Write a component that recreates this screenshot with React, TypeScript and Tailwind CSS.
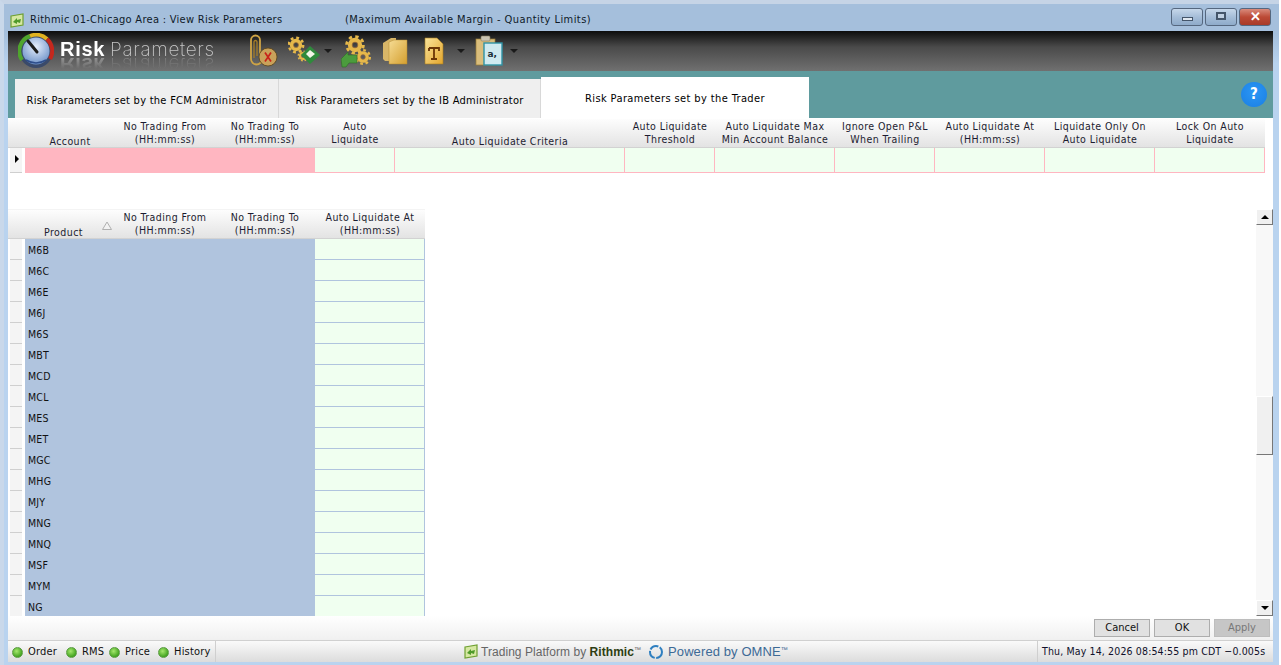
const font = "[font-family:'DejaVu_Sans_Condensed','DejaVu_Sans',sans-serif]";

const products = ["M6B","M6C","M6E","M6J","M6S","MBT","MCD","MCL","MES","MET","MGC","MHG","MJY","MNG","MNQ","MSF","MYM","NG"];

function Gauge() {
  return (
    <svg width="36" height="36" viewBox="0 0 36 36">
      <defs>
        <radialGradient id="gf" cx="50%" cy="35%" r="65%">
          <stop offset="0" stopColor="#e6eefb" />
          <stop offset="1" stopColor="#6f93c9" />
        </radialGradient>
      </defs>
      <circle cx="18" cy="18" r="17" fill="#3a4a6a" />
      <path d="M4 27 A16 16 0 0 1 12 3" fill="none" stroke="#4fa52d" strokeWidth="4" />
      <path d="M12 3 A16 16 0 0 1 29 6" fill="none" stroke="#e2b21f" strokeWidth="4" />
      <path d="M29 6 A16 16 0 0 1 32 26" fill="none" stroke="#c5281d" strokeWidth="4" />
      <circle cx="18" cy="18" r="13.5" fill="url(#gf)" />
      <path d="M10 8 L19 19" stroke="#1c1c1c" strokeWidth="3" strokeLinecap="round" />
      <path d="M8 27 Q18 33 28 27" stroke="#2d4d8a" strokeWidth="1.5" fill="none" />
    </svg>
  );
}

function Gear({ x, y, s = 1, c = "#e6b84a" }: { x: number; y: number; s?: number; c?: string }) {
  return (
    <g transform={`translate(${x} ${y}) scale(${s})`}>
      <circle r="7.6" fill="none" stroke={c} strokeWidth="2.6" strokeDasharray="3 2.97" />
      <circle r="4.6" fill="none" stroke={c} strokeWidth="3.8" />
      <circle r="2.6" fill="none" stroke="#a8753a" strokeWidth="0.7" />
    </g>
  );
}

function Clip() {
  return (
    <svg width="32" height="34" viewBox="0 0 32 34">
      <path d="M12 24 V6 a4.5 4.5 0 0 0 -9 0 V25 a5.5 5.5 0 0 0 11 0" fill="none" stroke="#cfa445" strokeWidth="1.8" />
      <path d="M9 22 V8 a1.5 1.5 0 0 0 -3 0 V24" fill="none" stroke="#a77d27" strokeWidth="1.3" />
      <circle cx="20" cy="23" r="9" fill="#c9a15a" stroke="#5a4418" strokeWidth="0.8" />
      <path d="M17 18.5 L23 27.5 M23 18.5 L17 27.5" stroke="#c8231a" strokeWidth="1.7" />
    </svg>
  );
}

function GearsSave() {
  return (
    <svg width="34" height="30" viewBox="0 0 34 30">
      <Gear x={8} y={9} s={0.95} />
      <Gear x={15} y={20} s={0.62} />
      <path d="M13 19 L22 10 L32 19 L22 28 Z" fill="#2f8a3c" />
      <path d="M18 18 L22 14 L27 18 L22 22 Z" fill="#f2f6e8" />
    </svg>
  );
}

function GearsArrow() {
  return (
    <svg width="30" height="34" viewBox="0 0 30 34">
      <Gear x={14} y={11} s={1.1} />
      <Gear x={22} y={23} s={0.9} />
      <path d="M0 25 L7 18 V21 H16 V29 H8 L5 33 H1 Z" fill="#4b9c3d" stroke="#2f6d28" strokeWidth="0.6" />
    </svg>
  );
}

function Files() {
  return (
    <svg width="26" height="28" viewBox="0 0 26 28">
      <defs>
        <linearGradient id="fg" x1="0" y1="0" x2="1" y2="1">
          <stop offset="0" stopColor="#f6dc94" />
          <stop offset="1" stopColor="#d49f2f" />
        </linearGradient>
      </defs>
      <path d="M1 6 L9 1 H14 V24 H3 L1 22 Z" fill="#d8b668" />
      <path d="M7 5 L12 3 H25 V27 H7 Z" fill="url(#fg)" stroke="#b78a2c" strokeWidth="0.5" />
    </svg>
  );
}

function FileT() {
  return (
    <svg width="20" height="28" viewBox="0 0 20 28">
      <defs>
        <linearGradient id="tg" x1="0" y1="0" x2="1" y2="1">
          <stop offset="0" stopColor="#fbe49a" />
          <stop offset="1" stopColor="#e2a52c" />
        </linearGradient>
      </defs>
      <path d="M1 1 H13 L19 7 V27 H1 Z" fill="url(#tg)" stroke="#a97d1e" strokeWidth="0.6" />
      <path d="M5 11 H15 V14 M10 11 V22 M7 22 H13 M5 11 V14" fill="none" stroke="#6b3606" strokeWidth="1.8" />
    </svg>
  );
}

function Clipboard() {
  return (
    <svg width="28" height="32" viewBox="0 0 28 32">
      <rect x="1" y="4" width="19" height="26" fill="#d9bd7c" stroke="#9a7c36" strokeWidth="0.7" />
      <rect x="6" y="1" width="9" height="5" rx="1" fill="#c9c3b2" stroke="#857a5a" strokeWidth="0.6" />
      <rect x="9" y="8" width="18" height="22" fill="#cfeaf0" stroke="#2f93a5" strokeWidth="1.4" />
      <text x="12.5" y="22" fontSize="9" fontWeight="700" fill="#20303a" fontFamily="'DejaVu Sans',sans-serif">a,</text>
    </svg>
  );
}

function Caret() {
  return <div className="w-0 h-0 border-x-[4px] border-x-transparent border-t-[4px] border-t-[#1a1a1a]" />;
}

function RithmicIcon({ size = 15 }: { size?: number }) {
  return (
    <svg width={size} height={size} viewBox="0 0 15 15">
      <path d="M1 3 L13 1 V12 L1 14 Z" fill="#d6e8a2" stroke="#6fa032" strokeWidth="1.2" />
      <path d="M3 9 L7 5 L7 7 L11 6 L10 10 L7 9 L7 11 Z" fill="#4f9a2a" />
    </svg>
  );
}

function Dot() {
  return <div className="w-[11px] h-[11px] rounded-full bg-[radial-gradient(circle_at_40%_35%,#a6e86e,#45a521_70%,#2f7f18)] border border-[#5c9c44]" />;
}

function Header({ w, children, single }: { w: number; children: React.ReactNode; single?: boolean }) {
  return (
    <div
      style={{ width: w }}
      className={`shrink-0 flex flex-col items-center text-[10.5px] leading-[13px] text-[#1c1c30] tracking-[0.42px] ${single ? "justify-end" : "justify-start pt-[1px]"}`}
    >
      {children}
    </div>
  );
}

function WinBtn({ bg, children }: { bg: string; children: React.ReactNode }) {
  return (
    <div className={`w-[32px] h-[18px] rounded-[3px] border border-[#55677f] flex items-center justify-center ${bg}`}>
      {children}
    </div>
  );
}

function Tab({ label, w, active }: { label: string; w: number; active?: boolean }) {
  return (
    <div
      style={{ width: w }}
      className={
        active
          ? "h-[41px] bg-white flex items-center justify-center text-[11px] tracking-[0.38px] text-black pt-[3px]"
          : "h-[39px] bg-[#efefef] border-r border-[#d8d8d8] flex items-center justify-center text-[11px] tracking-[0.27px] text-black pt-[5px]"
      }
    >
      {label}
    </div>
  );
}

function ActionBtn({ label, disabled }: { label: string; disabled?: boolean }) {
  return (
    <div
      className={`w-[56px] h-[18px] border flex items-center justify-center text-[11px] ${
        disabled ? "bg-[#c6c6c6] border-[#bdbdbd] text-[#777]" : "bg-[#e1e1e1] border-[#adadad] text-[#111]"
      }`}
    >
      {label}
    </div>
  );
}

function TopCells() {
  const widths = [80, 230, 90, 120, 100, 110, 110, 110];
  return (
    <>
      {widths.map((w, i) => (
        <div key={i} style={{ width: w }} className="shrink-0 h-full bg-[#f0fff0] border-r border-b border-[#ffb6c1]" />
      ))}
    </>
  );
}

function Status({ label, cls }: { label: string; cls: string }) {
  return (
    <div className={`flex items-center gap-[5px] ${cls}`}>
      <Dot />
      <span>{label}</span>
    </div>
  );
}

export default function App() {
  return (
    <div className={`${font} w-[1281px] h-[665px] overflow-hidden bg-white flex`}>
      <div className="w-[1279px] h-full flex flex-col bg-[linear-gradient(#a5bfdc_0px,#a5bfdc_30px,#b9d3ef_60px)] border-t-[4px] border-t-[#c6d4e6] border-l-[4px] border-l-[#c9d8ea]">
        {/* title bar */}
        <div className="h-[27px] shrink-0 flex items-center pl-[6px] pr-[8px] pt-[5px] text-[11px] text-[#0f1a28]">
          <RithmicIcon />
          <span className="ml-[5px] w-[315px] tracking-[0.29px]">Rithmic 01-Chicago Area : View Risk Parameters</span>
          <span className="tracking-[0.44px]">(Maximum Available Margin - Quantity Limits)</span>
          <div className="ml-auto flex gap-[2px] mb-[7px]">
            <WinBtn bg="bg-[linear-gradient(#c6d7ea,#a5bdd8_50%,#8fabca)]">
              <div className="w-[11px] h-[4px] mt-[4px] bg-[#dfe7f0] border border-[#44556a]" />
            </WinBtn>
            <WinBtn bg="bg-[linear-gradient(#c6d7ea,#a5bdd8_50%,#8fabca)]">
              <div className="w-[10px] h-[8px] bg-[#c0d0e2] border-2 border-[#44556a] mb-[2px]" />
            </WinBtn>
            <WinBtn bg="bg-[linear-gradient(#d98b7c,#bc4a36_50%,#a83a28)]">
              <span className="text-white font-bold text-[13px] leading-none [font-family:'Liberation_Sans',sans-serif]">✕</span>
            </WinBtn>
          </div>
        </div>

        {/* content */}
        <div className="ml-[4px] w-[1265px] flex-1 min-h-0 flex flex-col pb-[3px]">
          {/* toolbar */}
          <div className="h-[40px] shrink-0 flex items-center overflow-hidden bg-[linear-gradient(#0c0c0c,#4a4a4a_40%,#707070)]">
            <div className="ml-[10px] w-[36px] h-[36px]"><Gauge /></div>
            <div className="ml-[6px] h-[40px] w-[176px] [font-family:'Liberation_Sans',sans-serif] text-[20px] leading-[16px] pt-[10px] whitespace-nowrap">
              <div className="[-webkit-box-reflect:below_-2px_linear-gradient(transparent_25%,rgba(255,255,255,0.4))]">
                <span className="font-bold text-white tracking-[0.7px]">Risk</span>
                <span className="text-[#c4c4c4] ml-[5px] tracking-[0.65px] [font-family:'Inter',sans-serif] text-[19px] font-[200]">Parameters</span>
              </div>
            </div>
            <div className="flex items-center ml-[12px]">
              <Clip />
              <div className="ml-[8px]"><GearsSave /></div>
              <div className="ml-[2px]"><Caret /></div>
              <div className="ml-[9px]"><GearsArrow /></div>
              <div className="ml-[11px]"><Files /></div>
              <div className="ml-[16px]"><FileT /></div>
              <div className="ml-[13px]"><Caret /></div>
              <div className="ml-[10px]"><Clipboard /></div>
              <div className="ml-[7px]"><Caret /></div>
            </div>
          </div>

          {/* tabs */}
          <div className="h-[47px] shrink-0 bg-[#5f9b9e] flex items-end pl-[7px] pr-[6px]">
            <Tab label="Risk Parameters set by the FCM Administrator" w={264} />
            <Tab label="Risk Parameters set by the IB Administrator" w={262} />
            <Tab label="Risk Parameters set by the Trader" w={268} active />
            <div className="ml-auto mb-[11px] w-[26px] h-[25px] rounded-full bg-[radial-gradient(circle_at_50%_40%,#2b96f5,#1a7fe3)] flex items-center justify-center text-white text-[15px] font-bold">
              ?
            </div>
          </div>

          {/* main area */}
          <div className="flex-1 min-h-0 bg-white flex flex-col">
            {/* account grid */}
            <div className="h-[91px] shrink-0 flex flex-col">
              <div className="h-[30px] shrink-0 flex pl-[17px] w-[1257px] border-t border-white bg-[linear-gradient(#fdfdfd,#e3e3e3)] border-b border-b-[#d2d2d2]">
                <Header w={90} single><span className="translate-y-[1px]">Account</span></Header>
                <Header w={100}><span>No Trading From</span><span>(HH:mm:ss)</span></Header>
                <Header w={100}><span>No Trading To</span><span>(HH:mm:ss)</span></Header>
                <Header w={80}><span>Auto</span><span>Liquidate</span></Header>
                <Header w={230} single><span className="translate-y-[1px]">Auto Liquidate Criteria</span></Header>
                <Header w={90}><span>Auto Liquidate</span><span>Threshold</span></Header>
                <Header w={120}><span>Auto Liquidate Max</span><span>Min Account Balance</span></Header>
                <Header w={100}><span>Ignore Open P&amp;L</span><span>When Trailing</span></Header>
                <Header w={110}><span>Auto Liquidate At</span><span>(HH:mm:ss)</span></Header>
                <Header w={110}><span>Liquidate Only On</span><span>Auto Liquidate</span></Header>
                <Header w={110}><span>Lock On Auto</span><span>Liquidate</span></Header>
              </div>
              <div className="h-[25px] shrink-0 flex w-[1257px]">
                <div className="w-[17px] shrink-0 pl-[2px] pr-[3px]">
                  <div className="h-full bg-[#f4f4f4] border-b border-[#cfcfcf] flex items-center pl-[5px] pb-[2px]">
                    <div className="w-0 h-0 border-y-[4px] border-y-transparent border-l-[4px] border-l-black" />
                  </div>
                </div>
                <div className="w-[290px] shrink-0 bg-[#ffb6c1]" />
                <TopCells />
              </div>
            </div>

            {/* product grid + scrollbar */}
            <div className="flex-1 min-h-0 flex">
              <div className="w-[417px] shrink-0 flex flex-col overflow-hidden">
                <div className="h-[30px] shrink-0 flex pl-[17px] border-t border-[#f4f4f4] bg-[linear-gradient(#fdfdfd,#e3e3e3)] border-b border-b-[#d2d2d2]">
                  <div className="w-[90px] shrink-0 relative flex justify-center items-end text-[10.5px] leading-[13px] tracking-[0.42px] text-[#1c1c30]">
                    <span className="mr-[13px] translate-y-[1px]">Product</span>
                    <div className="absolute right-[3px] top-[11px]">
                      <svg width="10" height="9" viewBox="0 0 10 9"><path d="M5 1 L9.5 8.5 H0.5 Z" fill="#f2f2f2" stroke="#b0b0b0" /></svg>
                    </div>
                  </div>
                  <Header w={100}><span>No Trading From</span><span>(HH:mm:ss)</span></Header>
                  <Header w={100}><span>No Trading To</span><span>(HH:mm:ss)</span></Header>
                  <Header w={110}><span>Auto Liquidate At</span><span>(HH:mm:ss)</span></Header>
                </div>
                {products.map((p) => (
                  <div key={p} className="h-[21px] shrink-0 flex">
                    <div className="w-[17px] shrink-0 pl-[2px] pr-[3px]">
                      <div className="h-full bg-[#f4f4f4] border-b border-[#cfcfcf]" />
                    </div>
                    <div className="w-[290px] shrink-0 bg-[#b0c4de] flex items-center pl-[3px] pt-[3px] text-[10.5px] tracking-[0.2px] text-[#111]">
                      {p}
                    </div>
                    <div className="w-[110px] shrink-0 bg-[#f0fff0] border-r border-b border-[#b0c4de]" />
                  </div>
                ))}
              </div>

              <div className="flex-1" />

              {/* scrollbar */}
              <div className="w-[17px] shrink-0 bg-[#f8f8f8] flex flex-col">
                <div className="h-[16px] shrink-0 bg-[#f0f0f0] border-t border-l border-t-white border-l-white border-r-[1.5px] border-b-[1.5px] border-r-[#777] border-b-[#777] flex items-center justify-center">
                  <div className="w-0 h-0 border-x-[4px] border-x-transparent border-b-[4px] border-b-black" />
                </div>
                <div className="h-[171px] shrink-0" />
                <div className="h-[59px] shrink-0 bg-[#f0f0f0] border-t border-l border-t-white border-l-white border-r-[1.5px] border-b-[1.5px] border-r-[#777] border-b-[#777]" />
                <div className="flex-1" />
                <div className="h-[16px] shrink-0 bg-[#f0f0f0] border-t border-l border-t-white border-l-white border-r-[1.5px] border-b-[1.5px] border-r-[#777] border-b-[#777] flex items-center justify-center">
                  <div className="w-0 h-0 border-x-[4px] border-x-transparent border-t-[4px] border-t-black" />
                </div>
              </div>
            </div>
          </div>

          {/* action row */}
          <div className="h-[24px] shrink-0 flex items-center justify-end gap-[4px] pr-[3px] bg-[linear-gradient(#ffffff,#f0f0f0)]">
            <ActionBtn label="Cancel" />
            <ActionBtn label="OK" />
            <ActionBtn label="Apply" disabled />
          </div>

          {/* status bar */}
          <div className="h-[22px] shrink-0 flex items-center border-t border-[#d0d0d0] bg-[linear-gradient(#fafafa,#dcdcdc)] text-[11px] text-[#111]">
            <div className="w-[208px] h-full shrink-0 flex items-center pl-[4px] pt-[1px] border-r border-[#cfcfcf] tracking-[0.2px]">
              <Status label="Order" cls="w-[54px]" />
              <Status label="RMS" cls="w-[43px]" />
              <Status label="Price" cls="w-[49px]" />
              <Status label="History" cls="" />
            </div>
            <div className="flex-1 flex items-center pl-[248px] [font-family:'Liberation_Sans',sans-serif] text-[12px]">
              <RithmicIcon size={15} />
              <span className="ml-[2px] text-[#666] tracking-[0.05px]">Trading Platform by <b className="text-[#2e3e12]">Rithmic</b><sup className="text-[7px]">™</sup></span>
              <svg className="ml-[7px]" width="16" height="16" viewBox="0 0 16 16">
                <circle cx="8" cy="8" r="6" fill="none" stroke="#2f7fc0" strokeWidth="2" strokeDasharray="9 1.5" />
              </svg>
              <span className="ml-[4px] text-[#3d6a96] text-[13px] tracking-[0.1px]">Powered by OMNE<sup className="text-[7px]">™</sup></span>
            </div>
            <div className="w-[236px] h-full shrink-0 flex items-center pl-[4px] border-l border-[#cfcfcf] text-[10.5px] text-[#10102a] tracking-[0.14px] whitespace-nowrap">
              Thu, May 14, 2026 08:54:55 pm CDT −0.005s
            </div>
          </div>
        </div>
      </div>
    </div>
  );
}
